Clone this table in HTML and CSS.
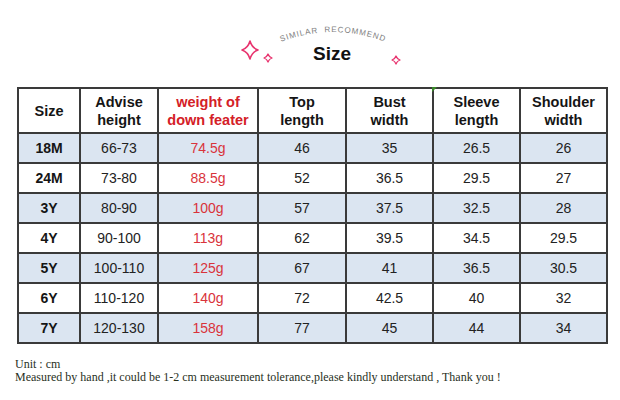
FILE: index.html
```html
<!DOCTYPE html>
<html>
<head>
<meta charset="utf-8">
<link rel="stylesheet" href="styles.css">
</head>
<body>
<div class="page">
  <header class="head">
    <svg class="deco" width="620" height="87" viewBox="0 0 620 87">
      <defs>
        <path id="arc" d="M 262 51 A 143 143 0 0 1 404 51"/>
      </defs>
      <path d="M250 41 Q252 48 258 50 Q252 52 250 59 Q248 52 242 50 Q248 48 250 41 Z" fill="none" stroke="#e8336e" stroke-width="1.6" stroke-linejoin="round"/>
      <path d="M268 54 Q269 57 272 58 Q269 59 268 62 Q267 59 264 58 Q267 57 268 54 Z" fill="none" stroke="#e8336e" stroke-width="1.3" stroke-linejoin="round"/>
      <path d="M396 56 Q397 59 400 60 Q397 61 396 64 Q395 61 392 60 Q395 59 396 56 Z" fill="none" stroke="#e8336e" stroke-width="1.3" stroke-linejoin="round"/>
      <text class="arc-text"><textPath href="#arc" startOffset="50%" text-anchor="middle">SIMILAR  RECOMMEND</textPath></text>
    </svg>
    <h1 class="title">Size</h1>
  </header>
  <table class="chart">
    <colgroup>
      <col class="c1"><col class="c2"><col class="c3"><col class="c4"><col class="c5"><col class="c6"><col class="c7">
    </colgroup>
    <thead>
      <tr>
        <th>Size</th>
        <th>Advise<br>height</th>
        <th class="red">weight of<br>down feater</th>
        <th>Top<br>length</th>
        <th>Bust<br>width</th>
        <th class="tick">Sleeve<br>length</th>
        <th>Shoulder<br>width</th>
      </tr>
    </thead>
    <tbody>
      <tr class="alt"><td class="sz">18M</td><td>66-73</td><td class="wt">74.5g</td><td>46</td><td>35</td><td>26.5</td><td>26</td></tr>
      <tr><td class="sz">24M</td><td>73-80</td><td class="wt">88.5g</td><td>52</td><td>36.5</td><td>29.5</td><td>27</td></tr>
      <tr class="alt"><td class="sz">3Y</td><td>80-90</td><td class="wt">100g</td><td>57</td><td>37.5</td><td>32.5</td><td>28</td></tr>
      <tr><td class="sz">4Y</td><td>90-100</td><td class="wt">113g</td><td>62</td><td>39.5</td><td>34.5</td><td>29.5</td></tr>
      <tr class="alt"><td class="sz">5Y</td><td>100-110</td><td class="wt">125g</td><td>67</td><td>41</td><td>36.5</td><td>30.5</td></tr>
      <tr><td class="sz">6Y</td><td>110-120</td><td class="wt">140g</td><td>72</td><td>42.5</td><td>40</td><td>32</td></tr>
      <tr class="alt"><td class="sz">7Y</td><td>120-130</td><td class="wt">158g</td><td>77</td><td>45</td><td>44</td><td>34</td></tr>
    </tbody>
  </table>
  <div class="notes">
    <p>Unit : cm</p>
    <p>Measured by hand ,it could be 1-2 cm measurement tolerance,please kindly understand , Thank you !</p>
  </div>
</div>
</body>
</html>
```
FILE: styles.css
```css
html, body {
  margin: 0;
  padding: 0;
  background: #ffffff;
}
.page {
  width: 620px;
  height: 400px;
  overflow: hidden;
}
.head {
  position: relative;
  height: 87px;
}
.deco {
  position: absolute;
  left: 0;
  top: 0;
}
.arc-text {
  font-family: "Liberation Sans", Arial, sans-serif;
  font-size: 8px;
  letter-spacing: 0.9px;
  fill: #808080;
  white-space: pre;
}
.title {
  position: relative;
  margin: 0;
  padding-top: 43px;
  text-align: center;
  padding-left: 44px;
  font-family: "Liberation Sans", Arial, sans-serif;
  font-weight: bold;
  font-size: 19px;
  line-height: 22px;
  color: #111;
}
.chart {
  margin-left: 17px;
  border-collapse: collapse;
  table-layout: fixed;
  width: 589px;
  font-family: "Liberation Sans", Arial, sans-serif;
  color: #222;
}
.c1 { width: 62px; }
.c2 { width: 78px; }
.c3 { width: 100px; }
.c4 { width: 88px; }
.c5 { width: 87px; }
.c6 { width: 87px; }
.c7 { width: 87px; }
.chart th, .chart td {
  border: 2px solid #3a3a3a;
  text-align: center;
  padding: 0;
}
.chart th {
  height: 43px;
  font-size: 14.5px;
  line-height: 18px;
  font-weight: bold;
  color: #151515;
}
.chart td {
  height: 28px;
  font-size: 14px;
  line-height: 16px;
}
.chart tr.alt td {
  background: #dbe5f1;
}
.chart th.red {
  color: #d42027;
}
.chart td.wt {
  color: #d9333b;
}
.chart td.sz {
  font-weight: bold;
  color: #151515;
}
.chart th.tick {
  position: relative;
}
.chart th.tick::before {
  content: "";
  position: absolute;
  left: -2px;
  top: -2px;
  border-top: 5px solid #3a8a2a;
  border-right: 5px solid transparent;
}
.notes {
  margin-top: 14px;
  padding-left: 15px;
  font-family: "Liberation Serif", "Times New Roman", serif;
  font-size: 12px;
  line-height: 13px;
  color: #28301c;
}
.notes p {
  margin: 0;
}
```
